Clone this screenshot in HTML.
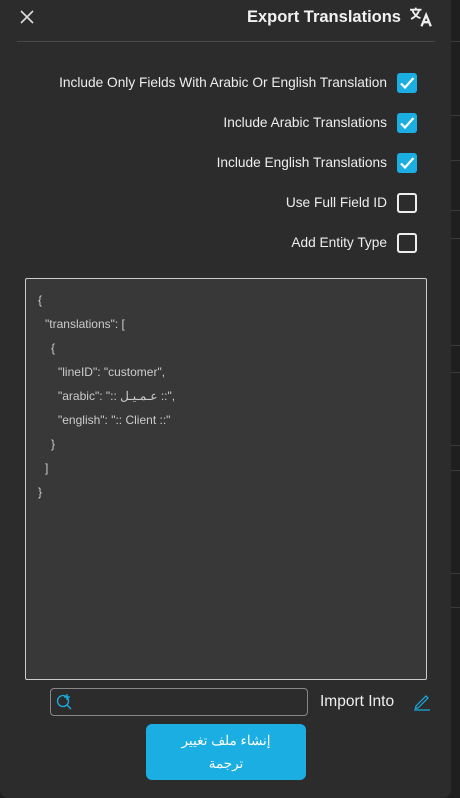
<!DOCTYPE html>
<html><head><meta charset="utf-8"><style>
*{margin:0;padding:0;box-sizing:border-box}
body{width:460px;height:798px;background:#1f1f1f;font-family:"Liberation Sans","Noto Sans CJK SC",sans-serif;position:relative;overflow:hidden;color:#eee}
.panel{position:absolute;left:0;top:0;width:451px;height:798px;background:#2c2c2c;border-radius:0 0 8px 8px}
.hl{position:absolute;left:451px;width:9px;height:1px;background:#3a3a3a}
.t{position:absolute;right:64px;font-size:13.7px;color:#eee;line-height:16px}
.cb{position:absolute;left:397px;width:20px;height:20px;border-radius:3px}
.on{background:#1aaee3}
.off{border:2px solid #eee}
.ta{position:absolute;left:25px;top:278px;width:402px;height:402px;background:#383838;border:1px solid #ccc;border-radius:2px}
.ta div{position:absolute;font-size:12px;color:#ccc;white-space:pre;line-height:14px}
</style></head><body>
<div class="hl" style="top:41px"></div><div class="hl" style="top:115px"></div><div class="hl" style="top:160px"></div><div class="hl" style="top:210px"></div><div class="hl" style="top:238px"></div><div class="hl" style="top:345px"></div><div class="hl" style="top:372px"></div><div class="hl" style="top:445px"></div><div class="hl" style="top:470px"></div><div class="hl" style="top:573px"></div><div class="hl" style="top:607px"></div>
<div class="panel">
<svg style="position:absolute;left:20px;top:10px" width="14" height="14" viewBox="0 0 14 14"><path d="M1 1L13 13M13 1L1 13" stroke="#ddd" stroke-width="1.6"/></svg>
<div style="position:absolute;right:50px;top:8px;font-size:16.5px;font-weight:bold;color:#f2f2f2">Export Translations</div>
<svg style="position:absolute;left:409px;top:6px" width="27" height="22" viewBox="0 0 26 20"><path d="M1 3H12M6.5 1V3M3 3Q6 10 11 11M10 3Q8 9 2 12" stroke="#eee" stroke-width="1.8" fill="none"/><path d="M12 19L16.5 8L21 19M13.6 15H19.4" stroke="#eee" stroke-width="2.2" fill="none"/></svg>
<div style="position:absolute;left:17px;top:41px;width:418px;height:1px;background:#474747"></div>
<div class="t" style="top:75px">Include Only Fields With Arabic Or English Translation</div>
<div class="t" style="top:115px">Include Arabic Translations</div>
<div class="t" style="top:155px">Include English Translations</div>
<div class="t" style="top:195px">Use Full Field ID</div>
<div class="t" style="top:235px">Add Entity Type</div>
<div class="cb on" style="top:73px"><svg width="20" height="20"><path d="M4 10.5L8 14.5L16.5 5" stroke="#fff" stroke-width="2.2" fill="none"/></svg></div>
<div class="cb on" style="top:113px"><svg width="20" height="20"><path d="M4 10.5L8 14.5L16.5 5" stroke="#fff" stroke-width="2.2" fill="none"/></svg></div>
<div class="cb on" style="top:153px"><svg width="20" height="20"><path d="M4 10.5L8 14.5L16.5 5" stroke="#fff" stroke-width="2.2" fill="none"/></svg></div>
<div class="cb off" style="top:193px"></div>
<div class="cb off" style="top:233px"></div>
<div class="ta">
<div style="left:12px;top:14px">{</div>
<div style="left:19px;top:38px">"translations": [</div>
<div style="left:25px;top:62px">{</div>
<div style="left:32px;top:86px">"lineID": "customer",</div>
<div style="left:32px;top:110px">"arabic": ":: عـمـيـل ::",</div>
<div style="left:32px;top:134px">"english": ":: Client ::"</div>
<div style="left:25px;top:158px">}</div>
<div style="left:19px;top:182px">]</div>
<div style="left:12px;top:206px">}</div>
</div>
<div style="position:absolute;left:50px;top:688px;width:258px;height:28px;border:1px solid #888;border-radius:4px"></div>
<svg style="position:absolute;left:55px;top:692px" width="20" height="20" viewBox="0 0 20 20"><circle cx="8" cy="9" r="5.5" stroke="#1aaee3" stroke-width="1.3" fill="none"/><path d="M12 13L16 17M12 2V8M9 5H15" stroke="#1aaee3" stroke-width="1.3" fill="none"/></svg>
<div style="position:absolute;left:320px;top:693px;font-size:15.5px;color:#eee">Import Into</div>
<svg style="position:absolute;left:413px;top:693px" width="18" height="18" viewBox="0 0 18 18"><path d="M3 13L13 3L15 5L5 15L2.5 15.5Z" stroke="#1aaee3" stroke-width="1.2" fill="none"/><path d="M1 17H17" stroke="#1aaee3" stroke-width="1.2"/></svg>
<div style="position:absolute;left:146px;top:724px;width:160px;height:56px;background:#1aaee3;border-radius:6px;color:#fff;font-size:13.5px;text-align:center;line-height:23px;padding-top:5px;direction:rtl">إنشاء ملف تغيير<br>ترجمة</div>
</div>
</body></html>
